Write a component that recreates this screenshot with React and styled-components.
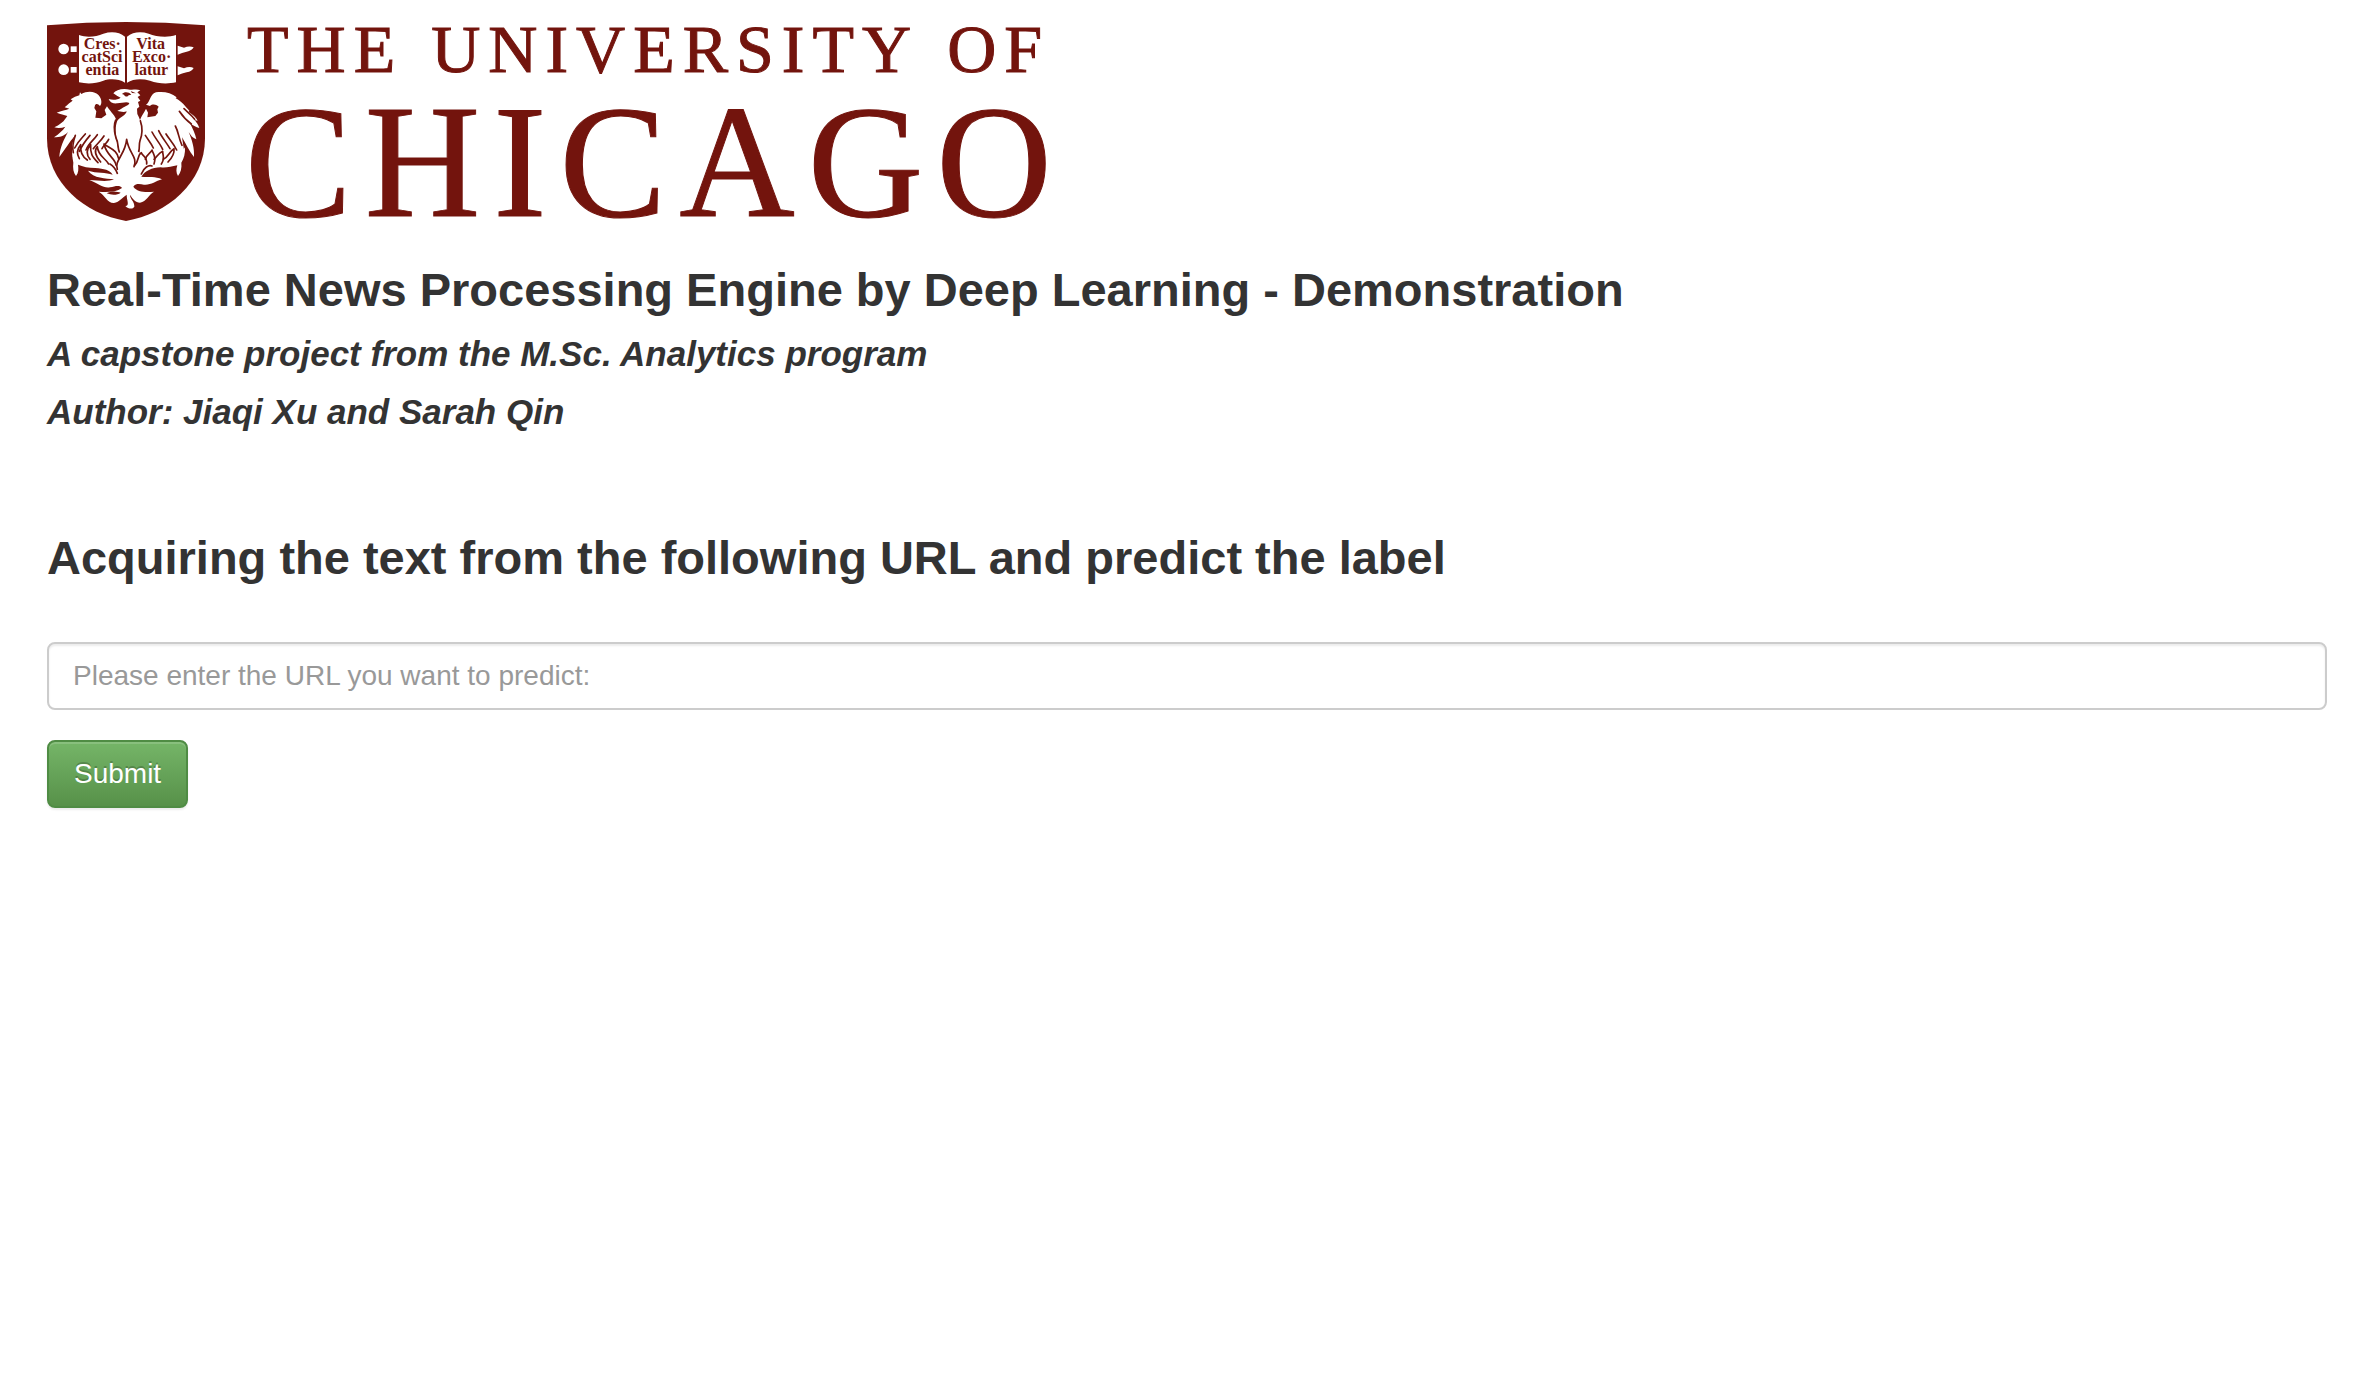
import React from "react";
import styled, { createGlobalStyle } from "styled-components";

const MAROON = "#73140d";

const GlobalStyle = createGlobalStyle`
  *, *::before, *::after {
    box-sizing: border-box;
  }

  body {
    margin: 0;
    background: #fff;
    color: #333;
    font-family: "Helvetica Neue", "Liberation Sans", Arial, sans-serif;
  }
`;

const Page = styled.main`
  padding: 22px 53px 60px 47px;
`;

const Brand = styled.div`
  display: flex;
  align-items: flex-start;
  gap: 40px;
`;

const CrestArt = styled.svg`
  flex: none;
  width: 158px;
  height: 199px;
`;

const Wordmark = styled.div`
  display: flex;
  flex-direction: column;
  gap: 26px;
  color: ${MAROON};
  font-family: "Liberation Serif", "Times New Roman", serif;
  white-space: nowrap;
`;

const WordmarkTop = styled.div`
  display: flex;
  gap: 28px;
  padding-left: 2px;
  font-size: 68px;
  line-height: 54px;
  letter-spacing: 8px;
  -webkit-text-stroke: 1px ${MAROON};
`;

const WordmarkMain = styled.div`
  font-size: 160px;
  line-height: 120px;
  letter-spacing: 13px;
  -webkit-text-stroke: 1px ${MAROON};
`;

const Intro = styled.header`
  display: flex;
  flex-direction: column;
  gap: 20px;
  margin-top: 43px;
`;

const Heading = styled.h1`
  margin: 0;
  font-size: 47px;
  font-weight: 700;
  line-height: 50px;
`;

const Byline = styled.p`
  margin: 0;
  font-size: 35px;
  font-style: italic;
  font-weight: 700;
  line-height: 38px;
`;

const PredictForm = styled.form`
  display: flex;
  flex-direction: column;
  align-items: flex-start;
  gap: 30px;
  margin-top: 102px;
`;

const FormTitle = styled.label`
  margin-bottom: 29px;
  font-size: 47px;
  font-weight: 700;
  line-height: 50px;
`;

const UrlInput = styled.input`
  width: 100%;
  height: 68px;
  padding: 12px 24px;
  border: 2px solid #ccc;
  border-radius: 8px;
  background: #fff;
  color: #555;
  font-family: inherit;
  font-size: 28px;
  line-height: 40px;
  box-shadow: inset 0 2px 2px rgba(0, 0, 0, 0.075);

  &::placeholder {
    color: #999;
    opacity: 1;
  }
`;

const SubmitButton = styled.button`
  height: 68px;
  padding: 12px 25px;
  border: 2px solid #4f8c44;
  border-radius: 8px;
  background: linear-gradient(to bottom, #75b568 0%, #579149 100%);
  color: #fff;
  font-family: inherit;
  font-size: 28px;
  line-height: 40px;
  text-shadow: 0 -2px 0 rgba(0, 0, 0, 0.2);
  box-shadow: inset 0 2px 0 rgba(255, 255, 255, 0.15), 0 2px 2px rgba(0, 0, 0, 0.075);
  cursor: pointer;
`;

const PAGE_TEXT = [
  { x: 217, y: 116, text: "Cres·" },
  { x: 216, y: 155, text: "catSci" },
  { x: 217, y: 194, text: "entia" },
  { x: 362, y: 118, text: "Vita" },
  { x: 365, y: 156, text: "Exco·" },
  { x: 364, y: 195, text: "latur" },
];

const WHITE_SHAPES = [
  // left wing
  "M150,247 L154,252 C172,242 196,244 206,256 C216,268 216,282 210,288 C204,280 198,280 195,286 L193,294 L199,304 L196,323 L214,325 L229,314 L224,300 L231,289 C238,302 252,312 258,328 C248,348 252,372 260,392 L268,440 L230,462 L140,462 L128,440 L126,405 L134,378 C118,396 104,420 88,441 C90,412 102,388 114,366 C102,378 90,382 72,382 C86,372 98,362 106,350 C96,354 84,355 73,352 C88,344 100,336 106,326 L112,318 C102,314 92,312 80,308 C94,302 108,300 118,296 L104,292 C112,284 122,276 128,272 L122,268 C130,262 140,258 148,256 Z",
  // right wing
  "M378,247 C400,243 424,248 440,262 L437,265 C456,274 466,290 478,302 L476,306 C488,314 498,322 503,332 L494,330 C500,338 505,344 508,354 C498,352 488,346 480,340 C488,356 496,372 499,388 C488,384 482,376 476,366 C486,390 494,414 492,441 C478,424 468,402 456,382 L462,420 L450,450 L400,470 L330,462 L328,400 C336,380 336,352 330,330 C334,318 342,308 348,296 L354,308 L352,322 L376,318 L384,308 L382,298 L386,290 C378,282 366,282 360,288 L348,284 C362,276 358,254 378,247 Z",
  // head, beak and body
  "M250,250 C258,240 276,234 300,239 C312,240 320,237 331,241 L322,247 L331,256 L323,261 L331,272 L324,276 L328,290 L321,296 L322,312 C334,332 338,362 330,394 L326,440 H264 L264,398 C254,372 256,346 262,332 C272,320 288,316 290,304 C280,308 270,304 262,302 C270,300 276,294 284,290 C292,286 298,284 298,279 C288,274 276,280 262,280 C250,281 240,278 236,267 C248,271 262,270 272,263 L262,258 Z",
  // nest
  "M130,402 C140,420 150,430 170,438 L230,440 L262,425 L290,388 L322,425 L360,438 L420,440 C440,434 456,426 465,412 C466,430 462,446 454,458 C456,474 452,488 444,498 C438,488 438,478 442,466 C424,470 408,474 392,472 C366,472 344,484 334,500 C356,502 376,498 396,508 C376,514 362,526 342,524 C328,522 318,520 310,530 C322,546 344,548 372,545 C356,554 350,574 330,578 C316,578 308,566 300,554 C300,568 314,574 313,590 C308,598 296,598 286,588 C300,586 290,572 290,554 C280,560 268,576 252,579 C232,580 226,556 206,545 C232,548 258,546 276,534 C270,524 256,528 240,532 C220,536 206,520 178,510 C206,512 236,516 252,508 C228,504 190,506 174,482 C200,490 228,486 248,494 C240,480 222,476 196,474 C176,474 158,470 144,464 C146,476 146,488 138,498 C130,488 128,474 130,458 C126,442 126,420 130,402 Z",
];

const DARK_LINES = [
  // wing edges against the body
  "M257,330 C248,350 254,368 258,384 C266,398 262,412 268,426",
  "M331,332 C338,352 336,376 330,392 C326,404 330,412 326,424",
  // feathers, left wing
  "M166,372 C156,384 144,394 134,414",
  "M180,376 C168,390 158,402 148,424",
  "M202,374 C190,392 176,400 168,420",
  "M222,378 C212,394 198,404 190,416",
  "M236,388 C232,398 222,404 216,416",
  "M136,376 C130,392 126,410 130,428",
  // feathers, right wing
  "M346,376 C356,392 364,400 370,414",
  "M366,366 C376,386 390,400 398,418",
  "M386,362 C396,384 410,398 420,416",
  "M408,372 C418,388 430,400 440,420",
  "M436,348 C446,366 446,386 456,406",
  "M462,296 C472,306 484,314 494,328",
  "M448,304 C460,322 470,332 484,342",
  // flames
  "M262,478 C252,452 286,434 290,388 C296,430 324,440 312,470",
  "M258,466 C258,446 230,438 222,402 C240,416 262,420 266,446",
  "M236,462 C226,444 204,438 202,410 C190,424 196,438 212,456",
  "M204,458 C186,440 180,430 182,404 C168,420 170,436 180,448",
  "M172,450 C156,440 150,424 152,404 C142,416 140,432 148,446",
  "M314,466 C328,452 322,434 334,428 C338,440 352,438 350,462",
  "M346,448 C352,430 362,430 366,420 C370,434 380,440 372,462",
  "M372,448 C382,440 384,430 398,424 C398,438 406,444 394,462",
  "M400,448 C416,440 418,424 432,416 C434,432 426,444 414,456",
  "M334,492 C342,472 356,464 366,468",
  "M240,462 C254,470 258,480 262,490",
];

const DARK_SHAPES = [
  "M276,252 C284,244 296,246 304,254 L296,256 C292,262 284,260 282,254 Z",
  "M302,243 L318,250 L306,249 Z",
  "M230,550 C246,540 264,546 272,548 C262,556 244,556 230,550 Z",
];

function Crest() {
  return (
    <CrestArt viewBox="51 36 474 597" aria-hidden="true">
      <path
        d="M51,46 Q170,36 288,36 Q406,36 525,46 V385 C525,520 411,612 288,633 C165,612 51,520 51,385 Z"
        fill={MAROON}
      />
      <g fill="#fff">
        <path d="M147,75 C172,84 198,80 220,71 C245,63 268,66 285,80 V218 C265,206 240,206 220,212 C195,222 170,222 147,217 Z" />
        <path d="M291,80 C308,66 332,63 356,71 C378,80 412,84 438,75 V217 C415,222 385,222 360,212 C335,205 310,206 291,218 Z" />
        {[0, 62].map((dy) => (
          <g key={dy} transform={`translate(0 ${dy})`}>
            <circle cx="101" cy="117" r="16" />
            <rect x="122" y="109" width="18" height="17" />
            <path d="M443,107 L462,113 Q478,106 491,112 Q486,122 470,125 Q456,128 443,134 Z" />
          </g>
        ))}
        {WHITE_SHAPES.map((d) => (
          <path key={d} d={d} />
        ))}
      </g>
      <g fill="none" stroke={MAROON} strokeWidth="5" strokeLinecap="round" strokeLinejoin="round">
        {DARK_LINES.map((d) => (
          <path key={d} d={d} />
        ))}
      </g>
      <g fill={MAROON}>
        {DARK_SHAPES.map((d) => (
          <path key={d} d={d} />
        ))}
      </g>
      <g
        fill={MAROON}
        fontFamily="'Liberation Serif', serif"
        fontWeight="700"
        fontSize="48"
        textAnchor="middle"
      >
        {PAGE_TEXT.map((line) => (
          <text key={line.text} x={line.x} y={line.y}>
            {line.text}
          </text>
        ))}
      </g>
    </CrestArt>
  );
}

export default function App() {
  return (
    <>
      <GlobalStyle />
      <Page>
        <Brand>
          <Crest />
          <Wordmark>
            <WordmarkTop>
              <span>THE</span>
              <span>UNIVERSITY</span>
              <span>OF</span>
            </WordmarkTop>
            <WordmarkMain>CHICAGO</WordmarkMain>
          </Wordmark>
        </Brand>
        <Intro>
          <Heading>Real-Time News Processing Engine by Deep Learning - Demonstration</Heading>
          <Byline>A capstone project from the M.Sc. Analytics program</Byline>
          <Byline>Author: Jiaqi Xu and Sarah Qin</Byline>
        </Intro>
        <PredictForm onSubmit={(event) => event.preventDefault()}>
          <FormTitle htmlFor="url">
            Acquiring the text from the following URL and predict the label
          </FormTitle>
          <UrlInput id="url" name="url" type="text" placeholder="Please enter the URL you want to predict:" />
          <SubmitButton type="submit">Submit</SubmitButton>
        </PredictForm>
      </Page>
    </>
  );
}
